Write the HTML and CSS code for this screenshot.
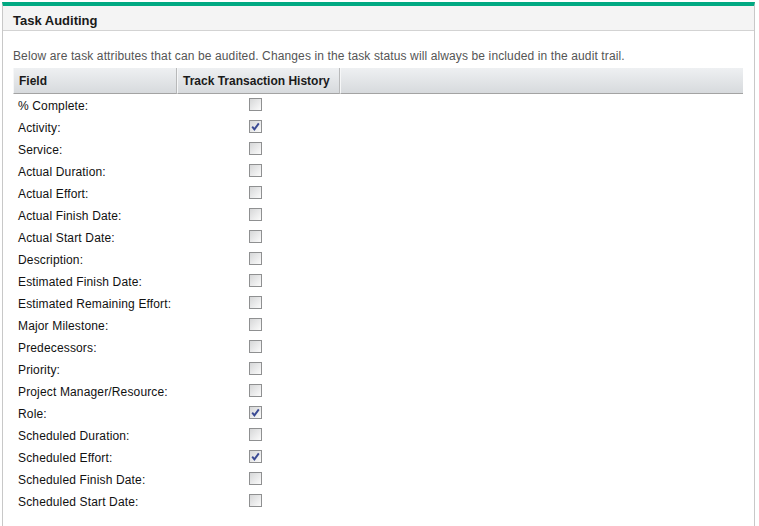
FILE: index.html
```html
<!DOCTYPE html>
<html lang="en">
  <head>
    <meta charset="UTF-8" />
    <title>Task Auditing</title>
    <link rel="stylesheet" href="styles.css">
  </head>
  <body>
    <div class="panel">
      <div class="panel-title">Task Auditing</div>

      <div class="panel-body">
        <div class="intro">
          Below are task attributes that can be audited. Changes in the task status will always be included in the audit trail.
        </div>

        <table class="audit-table">
          <colgroup>
            <col class="col-field" />
            <col class="col-track" />
            <col />
          </colgroup>
          <thead>
            <tr>
              <th>Field</th>
              <th>Track Transaction History</th>
              <th></th>
            </tr>
          </thead>
          <tbody>
            <tr><td>% Complete:</td><td class="cb-cell"><span class="cb"></span></td><td></td></tr>
            <tr><td>Activity:</td><td class="cb-cell"><span class="cb checked"><svg viewBox="0 0 11 11"><path d="M2.2 5.6 L4.4 8.4 L8.8 2.4" /></svg></span></td><td></td></tr>
            <tr><td>Service:</td><td class="cb-cell"><span class="cb"></span></td><td></td></tr>
            <tr><td>Actual Duration:</td><td class="cb-cell"><span class="cb"></span></td><td></td></tr>
            <tr><td>Actual Effort:</td><td class="cb-cell"><span class="cb"></span></td><td></td></tr>
            <tr><td>Actual Finish Date:</td><td class="cb-cell"><span class="cb"></span></td><td></td></tr>
            <tr><td>Actual Start Date:</td><td class="cb-cell"><span class="cb"></span></td><td></td></tr>
            <tr><td>Description:</td><td class="cb-cell"><span class="cb"></span></td><td></td></tr>
            <tr><td>Estimated Finish Date:</td><td class="cb-cell"><span class="cb"></span></td><td></td></tr>
            <tr><td>Estimated Remaining Effort:</td><td class="cb-cell"><span class="cb"></span></td><td></td></tr>
            <tr><td>Major Milestone:</td><td class="cb-cell"><span class="cb"></span></td><td></td></tr>
            <tr><td>Predecessors:</td><td class="cb-cell"><span class="cb"></span></td><td></td></tr>
            <tr><td>Priority:</td><td class="cb-cell"><span class="cb"></span></td><td></td></tr>
            <tr><td>Project Manager/Resource:</td><td class="cb-cell"><span class="cb"></span></td><td></td></tr>
            <tr><td>Role:</td><td class="cb-cell"><span class="cb checked"><svg viewBox="0 0 11 11"><path d="M2.2 5.6 L4.4 8.4 L8.8 2.4" /></svg></span></td><td></td></tr>
            <tr><td>Scheduled Duration:</td><td class="cb-cell"><span class="cb"></span></td><td></td></tr>
            <tr><td>Scheduled Effort:</td><td class="cb-cell"><span class="cb checked"><svg viewBox="0 0 11 11"><path d="M2.2 5.6 L4.4 8.4 L8.8 2.4" /></svg></span></td><td></td></tr>
            <tr><td>Scheduled Finish Date:</td><td class="cb-cell"><span class="cb"></span></td><td></td></tr>
            <tr><td>Scheduled Start Date:</td><td class="cb-cell"><span class="cb"></span></td><td></td></tr>
          </tbody>
        </table>
      </div>
    </div>
  </body>
</html>
```

FILE: styles.css
```css
body {
  font-family: "Liberation Sans", Arial, sans-serif;
  font-size: 12px;
  color: #111;
  background: #fff;
  margin: 0;
  padding: 2px 0 0 2px;
}

.panel {
  width: 751px;
  min-height: 520px;
  border-top: 4px solid #01a982;
  border-left: 1px solid #c8c8c8;
  border-right: 1px solid #c8c8c8;
}

.panel-title {
  height: 20px;
  line-height: 22px;
  padding: 4px 0 0 10px;
  background: #f4f4f4;
  border-bottom: 1px solid #d3d3d3;
  font-size: 13px;
  font-weight: bold;
  color: #1a1a1a;
}

.panel-body {
  padding: 17px 11px 0 10px;
}

.intro {
  color: #555;
  line-height: 14px;
  letter-spacing: 0.12px;
  padding-top: 1px;
  margin-bottom: 5px;
}

.audit-table {
  width: 730px;
  table-layout: fixed;
  border-collapse: separate;
  border-spacing: 0;
}

.col-field {
  width: 164px;
}

.col-track {
  width: 163px;
}

.audit-table th {
  height: 26px;
  padding: 1px 5px 0;
  text-align: left;
  font-weight: bold;
  color: #1a1a1a;
  background: linear-gradient(#eef0f2, #d7dadd);
  border-left: 1px solid #f6f7f8;
  border-right: 1px solid #b8b9ba;
  border-bottom: 1px solid #a3a3a3;
  box-sizing: border-box;
}

.audit-table th:last-child {
  border-right: none;
}

.audit-table td {
  box-sizing: border-box;
  height: 22px;
  padding: 1px 0 0 5px;
  letter-spacing: 0.15px;
  vertical-align: middle;
}

.audit-table td.cb-cell {
  padding: 0 0 0 72px;
}

.cb {
  display: inline-block;
  box-sizing: border-box;
  width: 13px;
  height: 13px;
  border: 1px solid #8f9091;
  background: linear-gradient(135deg, #d6d7d8, #fbfbfb);
  vertical-align: middle;
  margin-top: -2px;
}

.cb svg {
  display: block;
  width: 11px;
  height: 11px;
}

.cb svg path {
  fill: none;
  stroke: #3a4a94;
  stroke-width: 1.9;
}
```
